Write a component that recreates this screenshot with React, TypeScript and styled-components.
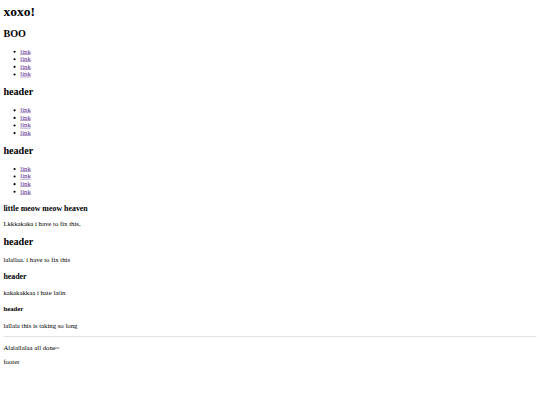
import styled, { createGlobalStyle } from 'styled-components';

const GlobalStyle = createGlobalStyle`
  html, body {
    margin: 0;
    padding: 0;
    background: #ffffff;
  }
`;

const Viewport = styled.div`
  width: 540px;
  height: 405px;
  overflow: hidden;
`;

// the page is a plain unstyled document laid out at 1280px wide, scaled down to the window
const Page = styled.div`
  width: 1280px;
  box-sizing: border-box;
  padding: 8px;
  transform: scale(0.421875);
  transform-origin: 0 0;
  font-family: 'Liberation Serif', 'Times New Roman', serif;
  font-size: 16px;
  color: #000000;
  display: flow-root;
`;

const Title = styled.h1`
  font-size: 2em;
  margin: 0 0 0.67em;
  font-weight: bold;
`;

const Heading = styled.h2`
  font-size: 1.5em;
  margin: 0.83em 0;
  font-weight: bold;
`;

const SubHeading = styled.h3`
  font-size: 1.17em;
  margin: 1em 0;
  font-weight: bold;
`;

const SmallHeading = styled.h4`
  font-size: 1em;
  margin: 1.33em 0;
  font-weight: bold;
`;

const LinkList = styled.ul`
  list-style: disc;
  margin: 1em 0;
  padding-left: 40px;
`;

const LinkItem = styled.li`
  line-height: normal;
`;

const NavLink = styled.a`
  color: #551a8b;
  text-decoration: underline;
`;

const Text = styled.p`
  margin: 1em 0;
`;

const Rule = styled.hr`
  border: none;
  border-top: 1px solid #b4b4b4;
  border-bottom: 1px solid #eeeeee;
  margin: 0.5em 0;
`;

const Links = () => (
  <LinkList>
    {[0, 1, 2, 3].map((i) => (
      <LinkItem key={i}>
        <NavLink href="#">link</NavLink>
      </LinkItem>
    ))}
  </LinkList>
);

const App = () => {
  return (
    <>
      <GlobalStyle />
      <Viewport>
        <Page>
          <Title>xoxo!</Title>
          <Heading>BOO</Heading>
          <Links />
          <Heading>header</Heading>
          <Links />
          <Heading>header</Heading>
          <Links />
          <SubHeading>little meow meow heaven</SubHeading>
          <Text>Lkkkakaka i have to fix this,</Text>
          <Heading>header</Heading>
          <Text>lalallaa. i have to fix this</Text>
          <SubHeading>header</SubHeading>
          <Text>kakakakkaa i hate latin</Text>
          <SmallHeading>header</SmallHeading>
          <Text>lallala this is taking so long</Text>
          <Rule />
          <Text>Alalallalaa all done~</Text>
          <Text>footer</Text>
        </Page>
      </Viewport>
    </>
  );
};

export default App;
